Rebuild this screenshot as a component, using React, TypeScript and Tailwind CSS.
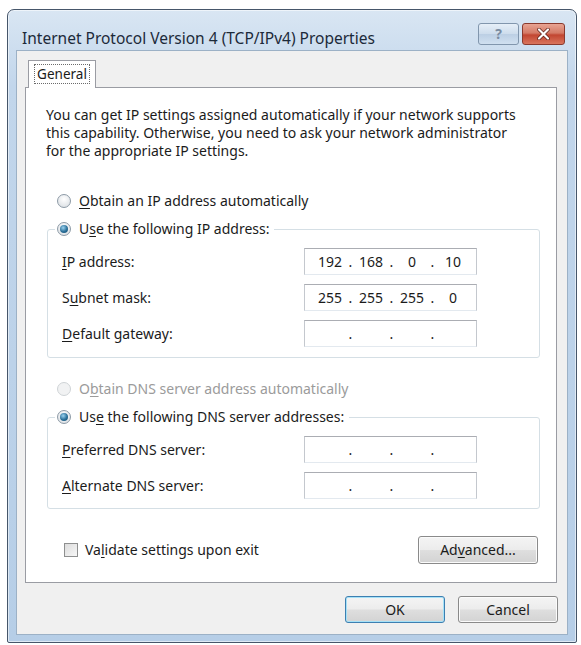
import { Fragment, type ReactNode } from "react";
import clsx from "clsx";

// Win7 style "IPv4 Properties" dialog

function Key({ children }: { children: ReactNode }) {
  return <span className="underline decoration-1 underline-offset-[2px]">{children}</span>;
}

function Radio({ checked = false, disabled = false }: { checked?: boolean; disabled?: boolean }) {
  return (
    <span
      className={clsx(
        "grid size-[14px] shrink-0 place-items-center rounded-full border",
        disabled
          ? "border-[#cfd3d6] bg-[#f1f2f3]"
          : "border-[#8d9aa6] bg-[radial-gradient(circle_at_50%_35%,#ffffff,#d6dbe0)]",
      )}
    >
      {checked && (
        <span className="size-[8px] rounded-full bg-[radial-gradient(circle_at_40%_35%,#9ad2f0,#2a6f98_55%,#134c70)]" />
      )}
    </span>
  );
}

function IpField({ octets }: { octets?: string[] }) {
  const parts = octets ?? ["", "", "", ""];
  return (
    <div className="flex h-[27px] w-[173px] items-center border border-[#c4c8ce] border-t-[#abadb3] border-b-[#e3e9ef] bg-white pl-[8px] text-[#1b1b1b]">
      {parts.map((p, i) => (
        <Fragment key={i}>
          {i > 0 && <span className="w-[7px] text-center">.</span>}
          <span className="w-[34px] text-center">{p}</span>
        </Fragment>
      ))}
    </div>
  );
}

function FieldRow({ label, octets }: { label: ReactNode; octets?: string[] }) {
  return (
    <div className="grid grid-cols-[242px_173px] items-center">
      <span>{label}</span>
      <IpField octets={octets} />
    </div>
  );
}

function WinButton({ children, primary = false, className }: { children: ReactNode; primary?: boolean; className?: string }) {
  return (
    <button
      className={clsx(
        "flex h-[27px] w-[100px] items-center justify-center rounded-[3px] border text-[#1b1b1b]",
        "bg-[linear-gradient(#f4f4f4_0%,#ececec_48%,#dedede_52%,#d3d3d3_100%)]",
        primary
          ? "border-[#3c7fb1] shadow-[inset_0_0_0_1px_#a6e1f7]"
          : "border-[#8a8a8a] shadow-[inset_0_0_0_1px_#fbfbfb]",
        className,
      )}
    >
      {children}
    </button>
  );
}

export default function App() {
  return (
    <div className="min-h-[645px] bg-white pl-[7px] pt-[9px] font-['Noto_Sans',sans-serif] text-[14px] leading-[18px] text-[#1b1b1b]">
      <div className="flex h-[634px] w-[570px] flex-col rounded-t-[7px] rounded-b-[2px] border border-[#46566a] bg-[linear-gradient(#d9e6f3,#c2d6eb_12%,#b6cee7)] shadow-[inset_0_0_0_1px_rgba(255,255,255,0.55)]">
        {/* title bar */}
        <div className="flex h-[40px] shrink-0 items-start">
          <span className="ml-[14px] mt-[18px] text-[15.5px] leading-[20px] text-[#1c2a3a]">
            Internet Protocol Version 4 (TCP/IPv4) Properties
          </span>
          <div className="ml-auto mr-[11px] mt-[13px] flex gap-[3px]">
            <div className="grid h-[22px] w-[41px] place-items-center rounded-[3px] border border-[#8196ad] bg-[linear-gradient(#e6eff8,#cddcec_50%,#bccfe4_52%,#d0e0f0)] text-[14px] font-bold leading-none text-[#7a8ca2]">
              ?
            </div>
            <div className="grid h-[22px] w-[43px] place-items-center rounded-[3px] border border-[#8a3a2e] bg-[linear-gradient(#e8a493,#d47a66_45%,#c24631_55%,#d9745c)]">
              <svg width="13" height="12" viewBox="0 0 13 12">
                <path d="M2 1.5 L11 10.5 M11 1.5 L2 10.5" stroke="#5a1e16" strokeWidth="3.6" strokeLinecap="round" />
                <path d="M2 1.5 L11 10.5 M11 1.5 L2 10.5" stroke="#ffffff" strokeWidth="2.2" strokeLinecap="round" />
              </svg>
            </div>
          </div>
        </div>

        {/* client area */}
        <div className="mb-[7px] ml-[8px] mr-[8px] flex flex-1 flex-col border border-[#9cb1c6] bg-[#f0f0f0]">
          <div className="ml-[11px] mt-[9px] flex">
            <div className="relative z-10 -mb-px flex h-[28px] w-[68px] items-start justify-center border border-b-0 border-[#9a9ca3] bg-white pt-[3px]">
              <span className="border border-dotted border-[#6b6b6b] px-[2px] text-[13.5px] leading-[18px]">General</span>
            </div>
          </div>

          <div className="ml-[8px] mr-[10px] flex h-[496px] flex-col border border-[#9a9ca3] bg-white">
            <p className="ml-[20px] mt-[18px]">
              You can get IP settings assigned automatically if your network supports
              <br />
              this capability. Otherwise, you need to ask your network administrator
              <br />
              for the appropriate IP settings.
            </p>

            <div className="ml-[31px] mt-[32px] flex items-center gap-[8px]">
              <Radio />
              <span>
                <Key>O</Key>btain an IP address automatically
              </span>
            </div>

            <fieldset className="ml-[21px] mr-[16px] mt-[10px] flex flex-col gap-[9px] rounded-[3px] border border-[#d5dfe5] pb-[10px] pl-[14px]">
              <legend className="-ml-[7px] mb-[10px] flex items-center gap-[8px] px-[2px] pr-[5px]">
                <Radio checked />
                <span>
                  U<Key>s</Key>e the following IP address:
                </span>
              </legend>
              <FieldRow label={<><Key>I</Key>P address:</>} octets={["192", "168", "0", "10"]} />
              <FieldRow label={<>S<Key>u</Key>bnet mask:</>} octets={["255", "255", "255", "0"]} />
              <FieldRow label={<><Key>D</Key>efault gateway:</>} />
            </fieldset>

            <div className="ml-[31px] mt-[22px] flex items-center gap-[8px] text-[#9b9b9b]">
              <Radio disabled />
              <span>
                O<Key>b</Key>tain DNS server address automatically
              </span>
            </div>

            <fieldset className="ml-[21px] mr-[16px] mt-[10px] flex flex-col gap-[9px] rounded-[3px] border border-[#d5dfe5] pb-[9px] pl-[14px]">
              <legend className="-ml-[7px] mb-[10px] flex items-center gap-[8px] px-[2px] pr-[5px]">
                <Radio checked />
                <span>
                  Us<Key>e</Key> the following DNS server addresses:
                </span>
              </legend>
              <FieldRow label={<><Key>P</Key>referred DNS server:</>} />
              <FieldRow label={<><Key>A</Key>lternate DNS server:</>} />
            </fieldset>

            <div className="mt-[27px] flex items-center pr-[18px]">
              <span className="ml-[38px] size-[14px] border border-[#8e8f8f] bg-[linear-gradient(135deg,#dcdcdc,#f7f7f7)]" />
              <span className="ml-[7px]">
                Va<Key>l</Key>idate settings upon exit
              </span>
              <WinButton className="ml-auto h-[28px] w-[120px]">
                Ad<Key>v</Key>anced...
              </WinButton>
            </div>
          </div>

          <div className="mr-[9px] mt-[13px] flex justify-end gap-[13px]">
            <WinButton primary>OK</WinButton>
            <WinButton>Cancel</WinButton>
          </div>
        </div>
      </div>
    </div>
  );
}
